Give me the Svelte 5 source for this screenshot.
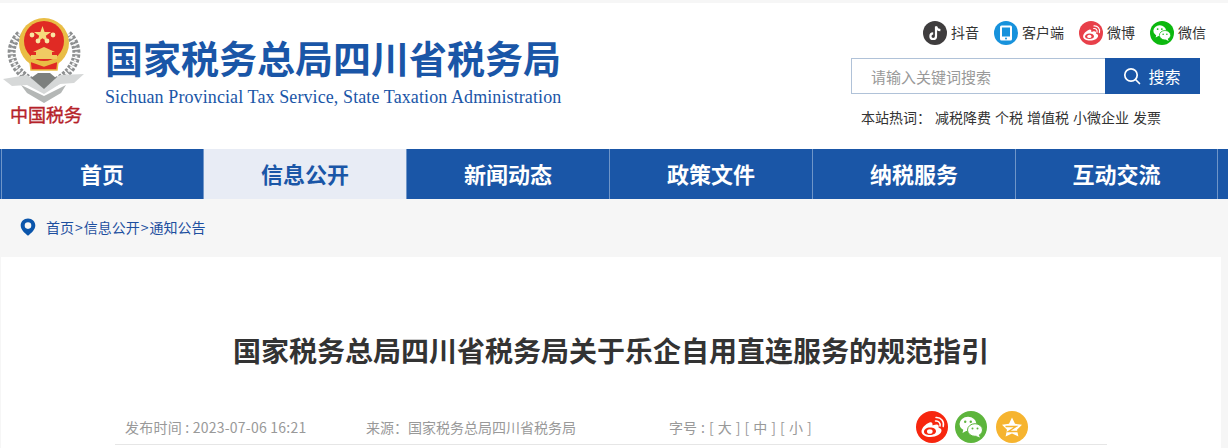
<script>
	const navItems = ['首页', '信息公开', '新闻动态', '政策文件', '纳税服务', '互动交流'];
	const hotWords = ['减税降费', '个税', '增值税', '小微企业', '发票'];
	const smallStars = [
		[32, 35],
		[53, 35],
		[38, 41],
		[47, 41]
	];
</script>

<header class="header">
	<a class="brand" href="#top">
		<svg class="emblem" viewBox="0 0 90 130" width="90" height="130" aria-hidden="true">
			<g fill="none" stroke-linecap="butt">
				<path d="M20 34C6 48 9 68 33 82" stroke="#8d8f90" stroke-width="8" stroke-dasharray="3 1.500" />
				<path d="M68 34C82 48 79 68 55 82" stroke="#8d8f90" stroke-width="8" stroke-dasharray="3 1.500" />
				<path d="M20 34C6 48 9 68 33 82" stroke="#f2f2f2" stroke-width="2.500" stroke-dasharray="2 2" />
				<path d="M68 34C82 48 79 68 55 82" stroke="#f2f2f2" stroke-width="2.500" stroke-dasharray="2 2" />
			</g>
			<path d="M3 79 27 75 44 87 60 75 84 74 74 83 60 84 44 94 27 85 12 86Z" fill="#d6d8d8" />
			<path d="M21 85 44 96 66 85 61 93 44 103 27 93Z" fill="#b4b7b6" />
			<path d="M31 78 44 89 56 78 50 73H38Z" fill="#7d807e" />
			<circle cx="44" cy="43" r="25" fill="#e9bd45" />
			<circle cx="44" cy="41" r="20" fill="#e02a24" />
			<path d="M30 61 44 66 58 61 57 70H31Z" fill="#e02a24" stroke="#e9bd45" stroke-width="1.500" />
			<path
				d="M42.500 26 44.600 32 51 32 45.800 35.800 47.800 42 42.500 38.200 37.200 42 39.200 35.800 34 32 40.400 32Z"
				fill="#f6dc7c"
			/>
			{#each smallStars as [x, y]}
				<circle cx={x} cy={y} r="2.400" fill="#f9e7a3" />
			{/each}
			<path d="M33 52 44 47 55 52 52 52V55H57V59H31V55H36V52Z" fill="#f0cb63" />
			<text class="emblem-text" x="10" y="122">中国税务</text>
		</svg>
		<div class="brand-text">
			<h1>国家税务总局四川省税务局</h1>
			<p>Sichuan Provincial Tax Service, State Taxation Administration</p>
		</div>
	</a>

	<div class="tools">
		<ul class="social">
			<li>
				<span class="badge tiktok">
					<svg viewBox="0 0 24 24" width="24" height="24" aria-hidden="true">
						<path d="M13 5.500V15.200A2.800 2.800 0 1 1 10.200 12.400" fill="none" stroke="#fff" stroke-width="2.200" />
						<path d="M13 5.500C13.400 7.600 15 9 17.400 9.200" fill="none" stroke="#fff" stroke-width="2.200" />
					</svg>
				</span>
				<span class="label">抖音</span>
			</li>
			<li>
				<span class="badge client">
					<svg viewBox="0 0 24 24" width="24" height="24" aria-hidden="true">
						<rect x="6" y="4.500" width="12" height="15" rx="1.500" fill="#fff" />
						<rect x="8" y="6.500" width="8" height="9" fill="#1792dc" />
						<circle cx="12" cy="17.500" r="1" fill="#1792dc" />
					</svg>
				</span>
				<span class="label">客户端</span>
			</li>
			<li>
				<span class="badge weibo">
					<svg viewBox="0 0 32 32" width="24" height="24" aria-hidden="true">
						<use href="#weibo-glyph" fill="#fff" />
					</svg>
				</span>
				<span class="label">微博</span>
			</li>
			<li>
				<span class="badge wechat">
					<svg viewBox="0 0 32 32" width="24" height="24" aria-hidden="true">
						<use href="#wechat-glyph" />
					</svg>
				</span>
				<span class="label">微信</span>
			</li>
		</ul>

		<form class="search" onsubmit={(e) => e.preventDefault()}>
			<input type="text" placeholder="请输入关键词搜索" />
			<button type="submit">
				<svg viewBox="0 0 18 18" width="18" height="18" aria-hidden="true">
					<circle cx="8" cy="8" r="6.200" fill="none" stroke="#fff" stroke-width="1.700" />
					<path d="M12.500 12.500 16.500 16.500" stroke="#fff" stroke-width="1.700" stroke-linecap="round" />
				</svg>
				<span class="label">搜索</span>
			</button>
		</form>

		<p class="hot">
			<span>本站热词：</span>
			{#each hotWords as word}
				<a href="#top">{word}</a>
			{/each}
		</p>
	</div>
</header>

<nav class="nav">
	{#each navItems as item, i}
		<a href="#top" class:active={i === 1}>{item}</a>
	{/each}
</nav>

<div class="crumbs">
	<svg viewBox="0 0 16 18" width="16" height="18" aria-hidden="true">
		<path
			d="M8 0.500C3.800 0.500 0.700 3.600 0.700 7.500C0.700 11.600 4.700 15 8 17.800C11.300 15 15.300 11.600 15.300 7.500C15.300 3.600 12.200 0.500 8 0.500ZM8 4.300A3.300 3.300 0 1 1 8 10.900A3.300 3.300 0 1 1 8 4.300Z"
			fill="#0b55ab"
			fill-rule="evenodd"
		/>
	</svg>
	<span>首页<i>&gt;</i>信息公开<i>&gt;</i>通知公告</span>
</div>

<main class="card">
	<h2>国家税务总局四川省税务局关于乐企自用直连服务的规范指引</h2>
	<div class="meta">
		<span class="date">发布时间 : 2023-07-06 16:21</span>
		<span class="source">来源：国家税务总局四川省税务局</span>
		<span class="size">字号 : [ 大 ] [ 中 ] [ 小 ]</span>
		<div class="share">
			<span class="round red">
				<svg viewBox="0 0 32 32" width="32" height="32" aria-hidden="true">
					<use href="#weibo-glyph" fill="#fff" />
				</svg>
			</span>
			<span class="round green">
				<svg viewBox="0 0 32 32" width="32" height="32" aria-hidden="true">
					<use href="#wechat-glyph" />
				</svg>
			</span>
			<span class="round amber">
				<svg viewBox="0 0 32 32" width="32" height="32" aria-hidden="true">
					<path
						d="M16 6.500 19 12.800 26 13.800 21 18.800 22.400 25.500 16 22.400 9.600 25.500 11 18.800 6 13.800 13 12.800Z"
						fill="#fff"
					/>
					<path d="M9.500 15.500H20L12.500 20.500H22" fill="none" stroke="#f6b42f" stroke-width="1.500" />
				</svg>
			</span>
		</div>
	</div>
</main>

<svg class="defs" width="0" height="0" aria-hidden="true">
	<defs>
		<g id="weibo-glyph">
			<path
				d="M13.500 11.500C9.500 13 5.500 17.200 5.500 20.500C5.500 24 9.800 26 14.500 26C20.500 26 25.500 23 25.500 19.500C25.500 17.500 23.500 17 22.500 16.500C23 15 22.800 13.500 20.500 13.500C18.500 13.500 17 14.500 16.500 14.500C16.800 12 15.800 10.700 13.500 11.500ZM14 16.500C10.500 16.500 8 18.500 8 20.700C8 22.800 10.500 24 14 24C17.500 24 20 22.500 20 20.300C20 18 17.500 16.500 14 16.500Z"
				fill-rule="evenodd"
			/>
			<path d="M11 20.500A2.800 2.300 0 1 1 16.600 20.500A2.800 2.300 0 1 1 11 20.500Z" />
			<path d="M19.500 10C22.500 9.500 24.800 12 24 15" fill="none" stroke="#fff" stroke-width="1.500" stroke-linecap="round" />
			<path d="M20 6.500C25 6 28.500 10.500 27.200 15.500" fill="none" stroke="#fff" stroke-width="1.500" stroke-linecap="round" />
		</g>
		<g id="wechat-glyph">
			<ellipse cx="13" cy="13" rx="8.500" ry="7.200" fill="#fff" />
			<path d="M8.500 18 7.500 22 12 19.500Z" fill="#fff" />
			<ellipse cx="20" cy="19" rx="7.500" ry="6.300" fill="#fff" stroke="currentColor" stroke-width="1" />
			<path d="M23.500 23.500 25 26.500 20.500 24.800Z" fill="#fff" />
			<circle cx="10.200" cy="10.800" r="1.200" fill="currentColor" />
			<circle cx="15.800" cy="10.800" r="1.200" fill="currentColor" />
			<circle cx="17.500" cy="17.500" r="1" fill="currentColor" />
			<circle cx="22.500" cy="17.500" r="1" fill="currentColor" />
		</g>
	</defs>
</svg>

<style>
	:global(body) {
		background: #f6f6f6;
		font-family: 'Noto Sans CJK SC', 'Liberation Sans', sans-serif;
		overflow: hidden;
	}

	a {
		color: inherit;
		text-decoration: none;
	}

	.header {
		display: flex;
		justify-content: space-between;
		height: 146px;
		margin-top: 3px;
		background: #fff;
	}

	.brand {
		display: flex;
		align-items: flex-start;
	}

	.emblem {
		flex-shrink: 0;
		margin-top: -3px;
		margin-right: 15px;
	}

	.emblem-text {
		font-size: 18px;
		font-weight: 400;
		fill: #b5222a;
		stroke: #b5222a;
		stroke-width: 0.400px;
	}

	.brand-text {
		padding-top: 30px;
		color: #1a56a7;
	}

	.brand-text h1 {
		margin: 0;
		font-size: 38px;
		font-weight: 700;
		line-height: 48px;
	}

	.brand-text p {
		margin: 5px 0 0;
		font-family: 'Liberation Serif', serif;
		font-size: 18px;
		line-height: 22px;
		white-space: nowrap;
		letter-spacing: 0.1px;
	}

	.tools {
		width: 377px;
		padding-top: 18px;
	}

	.social {
		display: flex;
		justify-content: flex-end;
		gap: 15px;
		margin: 0;
		padding: 0 22px 0 0;
		list-style: none;
	}

	.social li {
		display: flex;
		align-items: center;
		gap: 4px;
		font-size: 14px;
		line-height: 24px;
		color: #333;
	}

	.social .label {
		margin-top: -3px;
	}

	.badge {
		display: flex;
		width: 24px;
		height: 24px;
		border-radius: 50%;
	}

	.tiktok {
		background: #3f3d3e;
	}

	.client {
		background: #1792dc;
	}

	.weibo {
		background: #e8404a;
	}

	.wechat {
		background: #0cb80f;
		color: #0cb80f;
	}

	.search {
		display: flex;
		width: 349px;
		height: 36px;
		margin-top: 13px;
	}

	.search input {
		flex: 1;
		min-width: 0;
		box-sizing: border-box;
		padding: 0 19px;
		border: 1px solid #b0c2d8;
		border-right: 0;
		outline: 0;
		font: inherit;
		font-size: 15px;
	}

	.search input::placeholder {
		color: #999;
		opacity: 1;
	}

	.search button {
		display: flex;
		align-items: center;
		justify-content: center;
		gap: 7px;
		width: 95px;
		padding: 0 1px 0 0;
		border: 0;
		background: #1a56a7;
		color: #fff;
		font: inherit;
		font-size: 16px;
	}

	.search button .label {
		margin-top: -1px;
	}

	.hot {
		display: flex;
		gap: 4px;
		margin: 13px 0 0 10px;
		font-size: 14px;
		line-height: 20px;
		color: #333;
	}

	.nav {
		display: flex;
		height: 50px;
		background: #1a56a7;
	}

	.nav a {
		box-sizing: border-box;
		width: 203px;
		border-left: 1px solid #6f95c8;
		color: #fff;
		font-size: 22px;
		font-weight: 700;
		line-height: 48px;
		text-align: center;
	}

	.nav a:first-child {
		border-left-color: #1a56a7;
		box-shadow: inset 1px 0 #6f95c8;
	}

	.nav a:last-child {
		border-right: 1px solid #6f95c8;
	}

	.nav a.active {
		background: #e8ecf5;
		color: #1a56a7;
	}

	.crumbs {
		display: flex;
		align-items: center;
		gap: 10px;
		box-sizing: border-box;
		height: 58px;
		padding: 0 0 2px 20px;
		font-size: 14px;
		color: #1d4f9f;
	}

	.crumbs i {
		padding: 0 1px;
		font-style: normal;
	}

	.card {
		box-sizing: border-box;
		width: 1220px;
		height: 191px;
		margin-left: 1px;
		padding: 0 114px;
		background: #fff;
	}

	.card h2 {
		margin: 0;
		padding-top: 71px;
		font-size: 28px;
		font-weight: 700;
		line-height: 44px;
		text-align: center;
		white-space: nowrap;
		color: #333;
	}

	.meta {
		display: flex;
		align-items: center;
		height: 34px;
		margin-top: 38px;
		padding-left: 10px;
		border-bottom: 1px solid #e6e6e6;
		font-size: 14px;
		color: #999;
		white-space: nowrap;
	}

	.date {
		width: 241px;
		letter-spacing: 0.230px;
	}

	.source {
		width: 303px;
	}

	.size {
		width: 247px;
		word-spacing: 0.900px;
	}

	.share {
		display: flex;
		gap: 7px;
	}

	.round {
		display: flex;
		width: 32px;
		height: 32px;
		border-radius: 50%;
	}

	.red {
		background: #f7260e;
	}

	.green {
		background: #5db53c;
		color: #5db53c;
	}

	.amber {
		margin-left: 2px;
		background: #f6b42f;
	}

	.defs {
		position: absolute;
	}
</style>
